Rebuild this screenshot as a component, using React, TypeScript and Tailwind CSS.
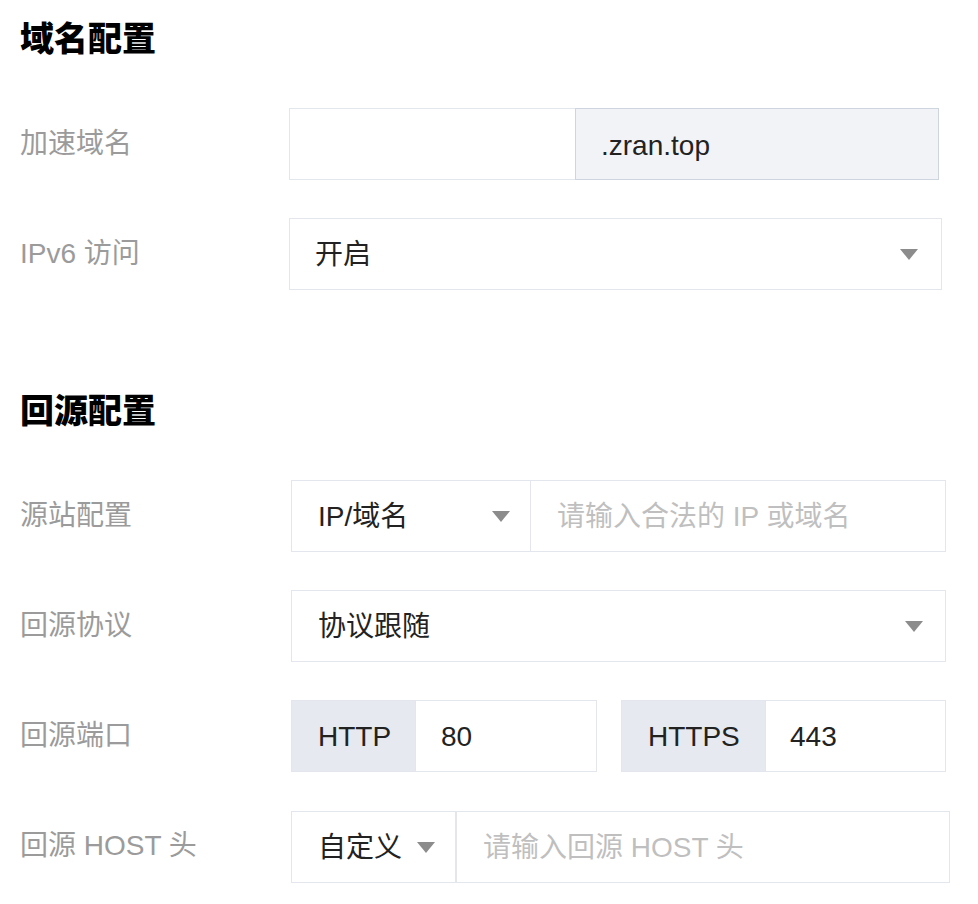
import React from "react";

const font = "font-['Liberation_Sans','Noto_Sans_CJK_SC',sans-serif]";

function Caret({ className = "" }: { className?: string }) {
  return (
    <svg width="18" height="11" viewBox="0 0 18 11" className={className}>
      <path d="M0 0 L18 0 L9 11 Z" fill="#8c8c8c" />
    </svg>
  );
}

function Row({ label, children }: { label: string; children: React.ReactNode }) {
  return (
    <div className="flex items-center h-[72px]">
      <div className="w-[269px] shrink-0 text-[28px] text-[#9b9b9b]">{label}</div>
      {children}
    </div>
  );
}

function Title({ children }: { children: React.ReactNode }) {
  return <h2 className="h-[48px] leading-[48px] text-[34px] font-black text-black">{children}</h2>;
}

export default function App() {
  return (
    <div className={`${font} bg-white w-[978px] h-[904px] pl-[20px] pt-[15px] text-[#222]`}>
      <Title>域名配置</Title>
      <div className="mt-[45px] flex flex-col gap-[38px]">
        <Row label="加速域名">
          <div className="flex h-[72px] w-[650px]">
            <div className="flex-1 border border-r-0 border-[#e3e7ed]" />
            <div className="w-[364px] flex items-center pl-[25px] pt-[4px] bg-[#f2f3f7] border border-[#cfd5de] text-[28px]">
              .zran.top
            </div>
          </div>
        </Row>
        <Row label="IPv6 访问">
          <div className="flex items-center justify-between h-[72px] w-[653px] border border-[#e3e7ed] pl-[25px] pr-[23px] text-[28px]">
            <span className="pt-[2px]">开启</span>
            <Caret />
          </div>
        </Row>
      </div>

      <div className="mt-[97px]">
        <Title>回源配置</Title>
      </div>
      <div className="mt-[45px] flex flex-col gap-[38px]">
        <Row label="源站配置">
          <div className="ml-[2px] flex h-[72px] w-[655px] border border-[#e3e7ed] text-[28px]">
            <div className="w-[239px] flex items-center justify-between pl-[26px] pr-[20px] border-r border-[#e3e7ed]">
              <span className="pt-[2px]">IP/域名</span>
              <Caret />
            </div>
            <div className="flex-1 flex items-center pl-[26px] pt-[2px] text-[#bfbfbf]">请输入合法的 IP 或域名</div>
          </div>
        </Row>
        <Row label="回源协议">
          <div className="ml-[2px] flex items-center justify-between h-[72px] w-[655px] border border-[#e3e7ed] pl-[26px] pr-[22px] text-[28px]">
            <span className="pt-[2px]">协议跟随</span>
            <Caret />
          </div>
        </Row>
        <Row label="回源端口">
          <div className="ml-[2px] flex gap-[24px] text-[28px]">
            <div className="flex h-[72px] w-[306px] border border-[#e3e7ed]">
              <div className="w-[124px] flex items-center pl-[26px] pt-[2px] bg-[#e6e9ef] border-r border-[#e3e7ed]">HTTP</div>
              <div className="flex-1 flex items-center pl-[25px] pt-[2px]">80</div>
            </div>
            <div className="flex h-[72px] w-[325px] border border-[#e3e7ed]">
              <div className="w-[144px] flex items-center pl-[26px] pt-[2px] bg-[#e6e9ef] border-r border-[#e3e7ed]">HTTPS</div>
              <div className="flex-1 flex items-center pl-[24px] pt-[2px]">443</div>
            </div>
          </div>
        </Row>
        <Row label="回源 HOST 头">
          <div className="ml-[2px] mt-[2px] flex h-[72px] w-[659px] border border-[#e3e7ed] text-[28px]">
            <div className="w-[165px] flex items-center justify-between pl-[26px] pr-[20px] border-r-2 border-[#e3e7ed]">
              <span className="pt-[2px]">自定义</span>
              <Caret />
            </div>
            <div className="flex-1 flex items-center pl-[26px] pt-[2px] text-[#bfbfbf]">请输入回源 HOST 头</div>
          </div>
        </Row>
      </div>
    </div>
  );
}
